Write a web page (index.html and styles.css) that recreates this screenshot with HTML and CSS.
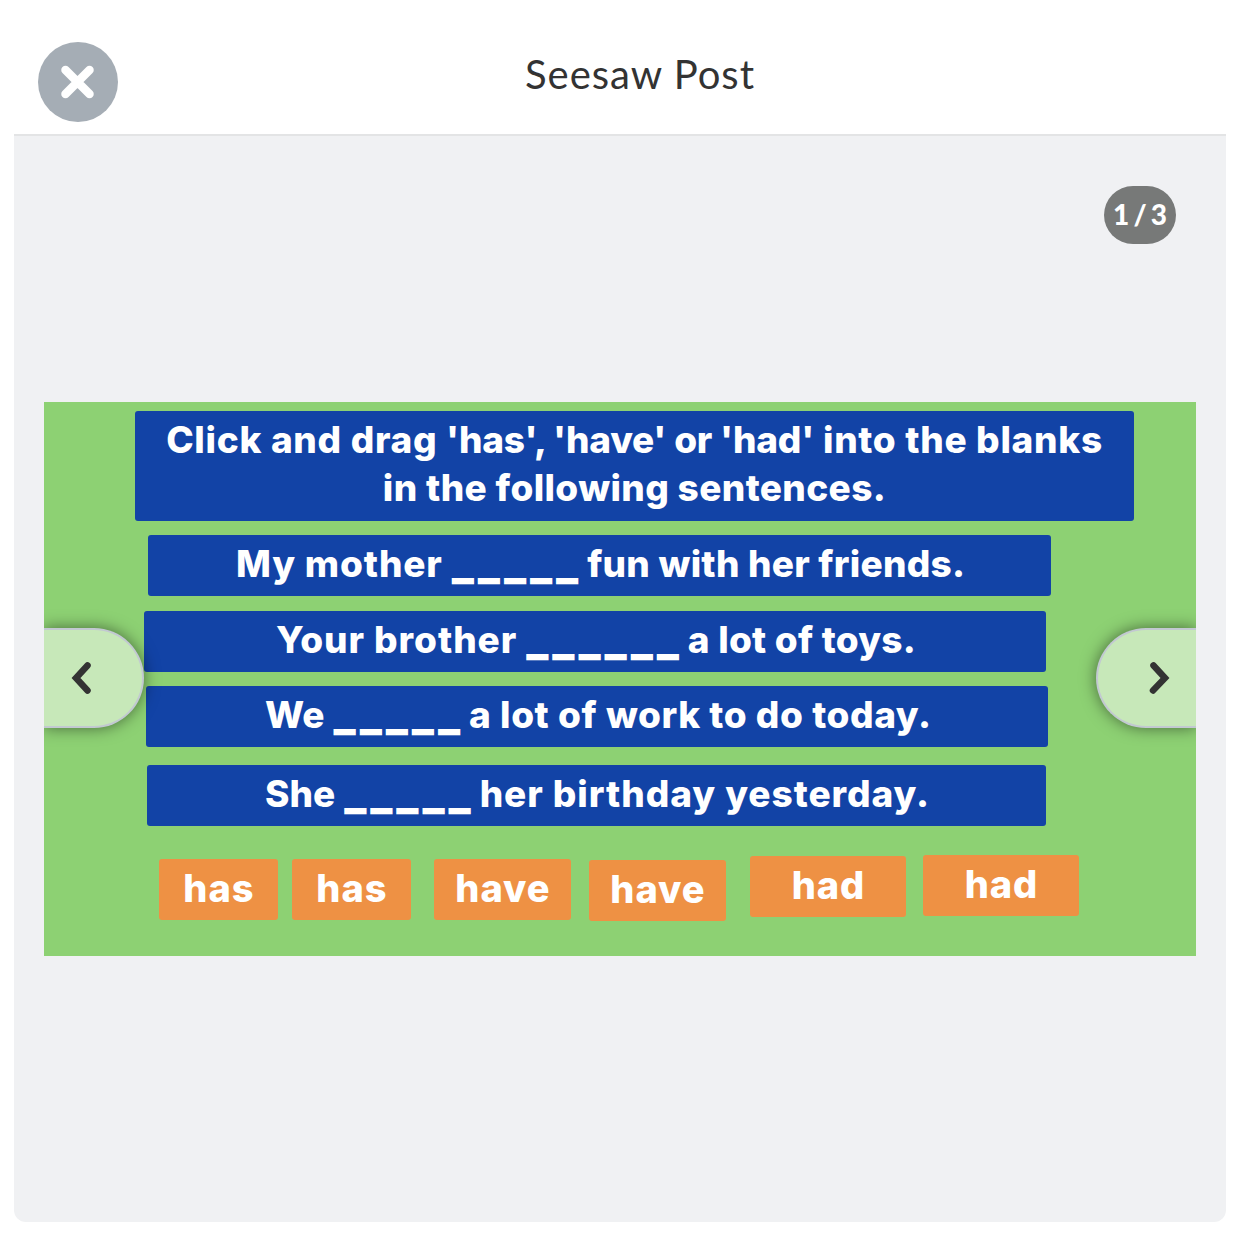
FILE: index.html
```html
<!DOCTYPE html>
<html lang="en">
<head>
    <meta charset="UTF-8">
    <meta name="viewport" content="width=device-width, initial-scale=1.0">
    <title>Seesaw Post</title>
    <link rel="stylesheet" href="styles.css">
</head>
<body>
    <div class="modal">
        <header class="modal-header">
            <button class="close-btn" aria-label="Close">
                <svg width="80" height="80" viewBox="0 0 80 80">
                    <path d="M27.5 28L51.5 52M51.5 28L27.5 52" stroke="#fff" stroke-width="8.5" stroke-linecap="round"/>
                </svg>
            </button>
            <h1 class="title">Seesaw Post</h1>
        </header>
        <main class="modal-body">
            <div class="page-count">1 / 3</div>
            <div class="slide">
                <div class="card prompt">
                    Click and drag <span class="word">'has', 'have' or 'had'</span> into the blanks<br>
                    <span class="line2">in the following sentences.</span>
                </div>
                <div class="card sentence s1">
                    <span class="before">My mother</span>
                    <span class="blank">_____</span>
                    <span class="after">fun with her friends.</span>
                </div>
                <div class="card sentence s2">
                    <span class="before">Your brother</span>
                    <span class="blank">______</span>
                    <span class="after">a lot of toys.</span>
                </div>
                <div class="card sentence s3">
                    <span class="before">We</span>
                    <span class="blank">_____</span>
                    <span class="after">a lot of work to do today.</span>
                </div>
                <div class="card sentence s4">
                    <span class="before">She</span>
                    <span class="blank">_____</span>
                    <span class="after">her birthday yesterday.</span>
                </div>
                <div class="tiles">
                    <div class="tile has1">has</div>
                    <div class="tile has2">has</div>
                    <div class="tile have1">have</div>
                    <div class="tile have2">have</div>
                    <div class="tile had1">had</div>
                    <div class="tile had2">had</div>
                </div>
                <button class="nav prev" aria-label="Previous">
                    <svg width="100" height="100" viewBox="0 0 100 100">
                        <path d="M43.5 37.5L32 50L43.5 62.5" fill="none" stroke="#333" stroke-width="6.5" stroke-linecap="round"/>
                    </svg>
                </button>
                <button class="nav next" aria-label="Next">
                    <svg width="100" height="100" viewBox="0 0 100 100">
                        <path d="M55.5 37.5L67 50L55 62.5" fill="none" stroke="#333" stroke-width="6.5" stroke-linecap="round"/>
                    </svg>
                </button>
            </div>
        </main>
    </div>
</body>
</html>
```
FILE: styles.css
```css
* {
    box-sizing: border-box;
}
body {
    margin: 0;
    height: 1252px;
    background-color: #fff;
    font-family: Lato, sans-serif;
    overflow: hidden;
}
.modal {
    width: 1212px;
    margin-left: 14px;
}
.modal-header {
    display: flex;
    height: 134px;
    padding: 42px 24px 0;
}
.close-btn {
    width: 80px;
    height: 80px;
    padding: 0;
    border: none;
    border-radius: 50%;
    background-color: #a5adb5;
}
.close-btn svg, .nav svg {
    display: block;
}
.title {
    flex: 1;
    margin: 8px 40px 0 0;
    font-size: 40px;
    font-weight: 400;
    line-height: 48px;
    letter-spacing: 1px;
    text-align: center;
    color: #333;
}
.modal-body {
    height: 1088px;
    padding: 50px 30px 0;
    border-top: 2px solid #e3e4e5;
    border-radius: 0 0 12px 12px;
    background-color: #f0f1f3;
}
.page-count {
    width: 72px;
    height: 58px;
    margin: 0 20px 0 auto;
    border-radius: 29px;
    background-color: #777978;
    font-size: 28px;
    font-weight: 900;
    line-height: 56px;
    word-spacing: -2.5px;
    text-align: center;
    color: #fff;
}
.slide {
    position: relative;
    height: 554px;
    margin-top: 158px;
    padding-top: 9px;
    overflow: hidden;
    background-color: #8dd173;
    font-family: Inter, sans-serif;
    font-size: 37px;
    font-weight: 800;
    color: #fff;
}
.card {
    height: 61px;
    border-radius: 3px;
    background-color: #1243a6;
    white-space: nowrap;
}
.prompt {
    width: 999px;
    height: 110px;
    margin-left: 91px;
    padding-top: 5px;
    line-height: 48px;
    letter-spacing: 0.7px;
    text-align: center;
}
.prompt .word {
    letter-spacing: -0.2px;
}
.prompt .line2 {
    letter-spacing: 0.36px;
}
.sentence {
    display: flex;
    align-items: baseline;
    line-height: 52px;
}
.blank {
    position: relative;
    top: 1px;
    margin: 0 5px 0 9px;
    font-size: 45px;
    font-weight: 900;
    letter-spacing: 3.9px;
}
.s1 { width: 903px; margin: 14px 0 0 104px; padding-left: 88px; }
.s2 { width: 902px; margin: 15px 0 0 100px; padding-left: 132px; }
.s3 { width: 902px; margin: 14px 0 0 102px; padding-left: 119px; }
.s4 { width: 899px; margin: 18px 0 0 103px; padding-left: 118px; }
.s1 .before { letter-spacing: 0.85px; }
.s1 .after { letter-spacing: 0.25px; }
.s2 .before { letter-spacing: 0.95px; }
.s2 .after { letter-spacing: 0.25px; }
.s3 .after { letter-spacing: 0.58px; }
.s4 .after { letter-spacing: 0.95px; }
.tiles {
    display: flex;
    align-items: flex-start;
    margin: 28px 0 0 115px;
}
.tile {
    height: 61px;
    border-radius: 3px;
    background-color: #ee9144;
    font-size: 38px;
    line-height: 58px;
    letter-spacing: 1px;
    text-indent: 1px;
    text-align: center;
}
.has1, .has2 { width: 119px; margin: 5px 14px 0 0; }
.have1 { width: 137px; margin: 5px 18px 0 9px; }
.have2 { width: 137px; margin: 6px 24px 0 0; }
.had1 { width: 156px; margin: 2px 17px 0 0; }
.had2 { width: 156px; margin-top: 1px; }
/* side arrows over the slide, the outer edge is cut by the slide */
.nav {
    position: absolute;
    top: 226px;
    width: 100px;
    height: 100px;
    padding: 0;
    border: 2px solid #c2c9d1;
    background-color: #c7e8b9;
    box-shadow: 0 0 16px rgba(0, 0, 0, 0.5);
}
.nav svg {
    margin-top: -2px;
}
.prev {
    left: 0;
    border-left: none;
    border-radius: 0 50px 50px 0;
}
.next {
    right: 0;
    border-right: none;
    border-radius: 50px 0 0 50px;
}
```
